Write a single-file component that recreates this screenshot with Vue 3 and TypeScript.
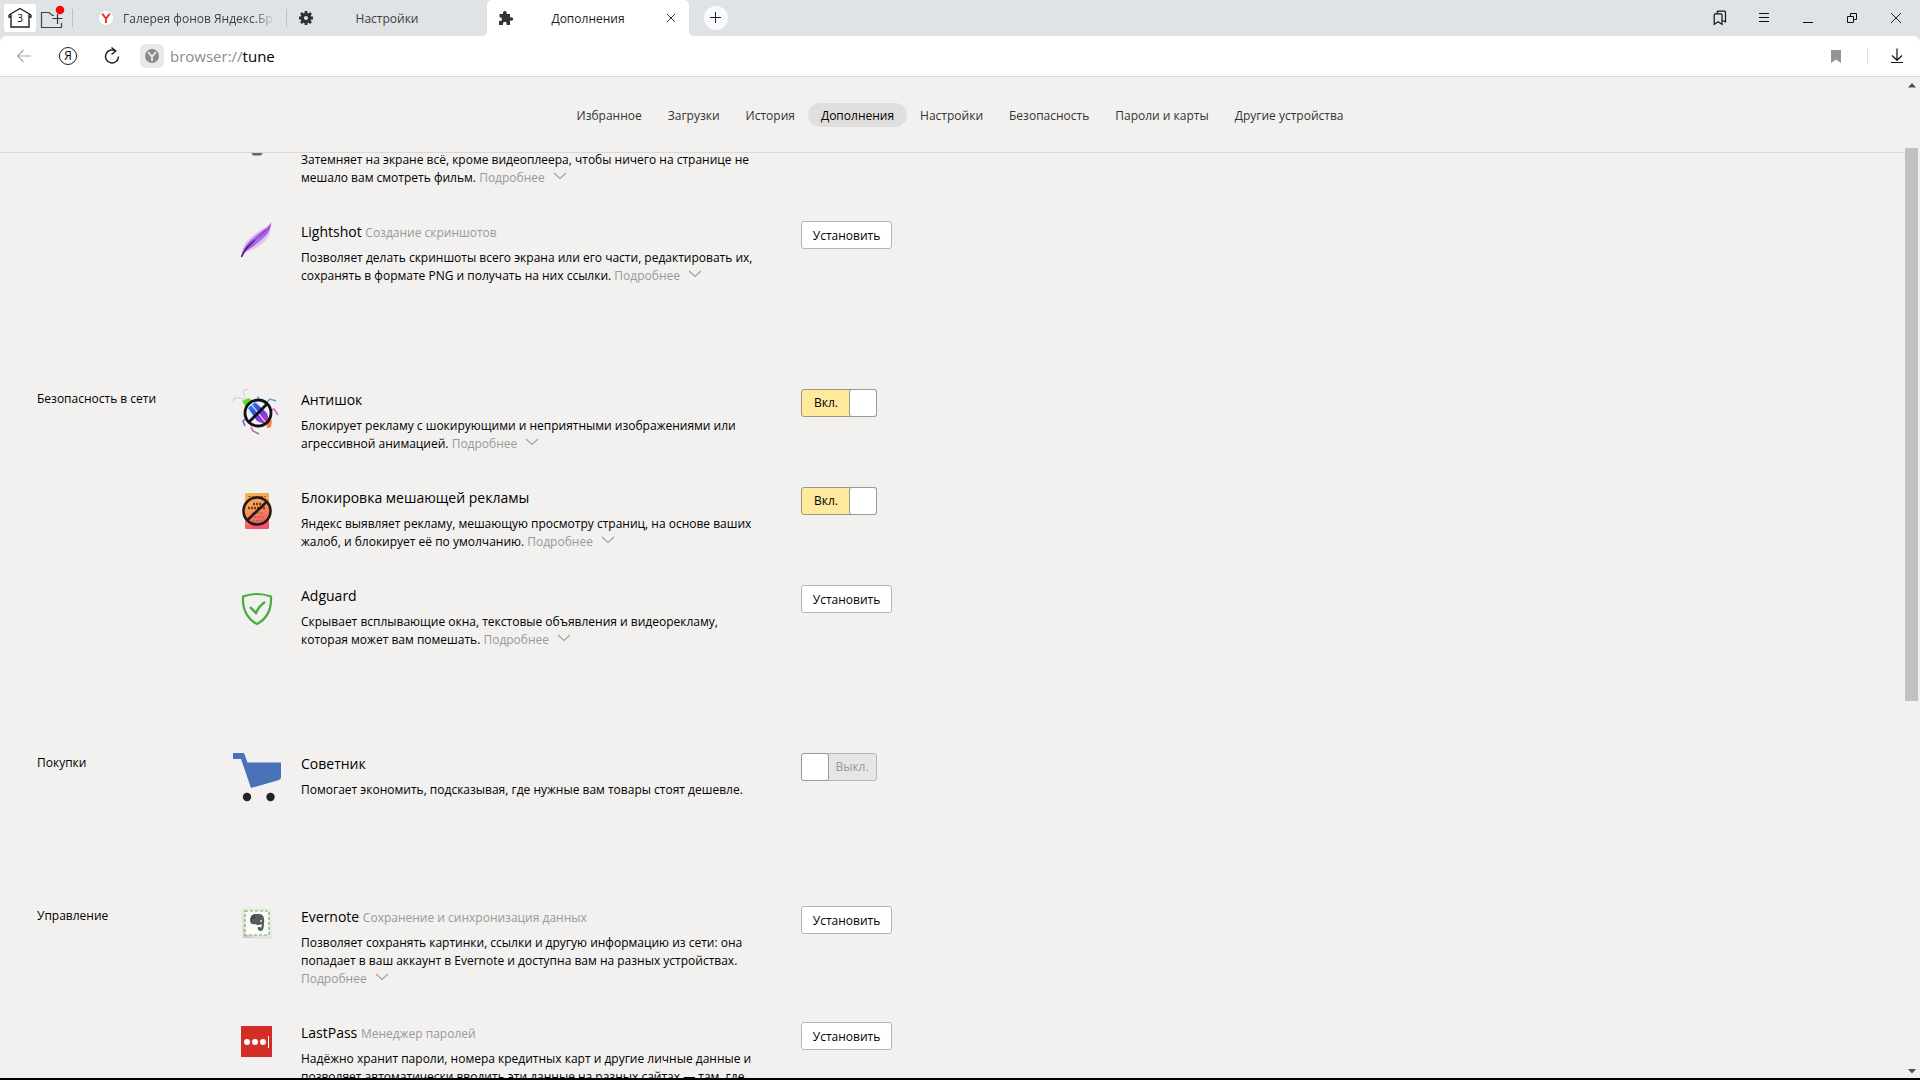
<script setup lang="ts">
import { reactive, ref } from 'vue'

type Icon = 'lamp' | 'feather' | 'bug' | 'adblock' | 'shield' | 'cart' | 'evernote' | 'lastpass'

interface Addon {
  id: string
  icon: Icon
  title?: string
  subtitle?: string
  lines: string[]
  more: boolean
  control?: 'install' | 'toggle'
  enabled?: boolean
}

interface Section {
  label: string
  addons: Addon[]
}

const navItems = [
  'Избранное',
  'Загрузки',
  'История',
  'Дополнения',
  'Настройки',
  'Безопасность',
  'Пароли и карты',
  'Другие устройства',
]
const activeNav = ref('Дополнения')

const sections = reactive<Section[]>([
  {
    label: '',
    addons: [
      {
        id: 'cinema',
        icon: 'lamp',
        lines: [
          'Затемняет на экране всё, кроме видеоплеера, чтобы ничего на странице не',
          'мешало вам смотреть фильм.',
        ],
        more: true,
      },
      {
        id: 'lightshot',
        icon: 'feather',
        title: 'Lightshot',
        subtitle: 'Создание скриншотов',
        lines: [
          'Позволяет делать скриншоты всего экрана или его части, редактировать их,',
          'сохранять в формате PNG и получать на них ссылки.',
        ],
        more: true,
        control: 'install',
      },
    ],
  },
  {
    label: 'Безопасность в сети',
    addons: [
      {
        id: 'antishock',
        icon: 'bug',
        title: 'Антишок',
        lines: [
          'Блокирует рекламу с шокирующими и неприятными изображениями или',
          'агрессивной анимацией.',
        ],
        more: true,
        control: 'toggle',
        enabled: true,
      },
      {
        id: 'adblock',
        icon: 'adblock',
        title: 'Блокировка мешающей рекламы',
        lines: [
          'Яндекс выявляет рекламу, мешающую просмотру страниц, на основе ваших',
          'жалоб, и блокирует её по умолчанию.',
        ],
        more: true,
        control: 'toggle',
        enabled: true,
      },
      {
        id: 'adguard',
        icon: 'shield',
        title: 'Adguard',
        lines: [
          'Скрывает всплывающие окна, текстовые объявления и видеорекламу,',
          'которая может вам помешать.',
        ],
        more: true,
        control: 'install',
      },
    ],
  },
  {
    label: 'Покупки',
    addons: [
      {
        id: 'sovetnik',
        icon: 'cart',
        title: 'Советник',
        lines: ['Помогает экономить, подсказывая, где нужные вам товары стоят дешевле.'],
        more: false,
        control: 'toggle',
        enabled: false,
      },
    ],
  },
  {
    label: 'Управление',
    addons: [
      {
        id: 'evernote',
        icon: 'evernote',
        title: 'Evernote',
        subtitle: 'Сохранение и синхронизация данных',
        lines: [
          'Позволяет сохранять картинки, ссылки и другую информацию из сети: она',
          'попадает в ваш аккаунт в Evernote и доступна вам на разных устройствах.',
          '',
        ],
        more: true,
        control: 'install',
      },
      {
        id: 'lastpass',
        icon: 'lastpass',
        title: 'LastPass',
        subtitle: 'Менеджер паролей',
        lines: [
          'Надёжно хранит пароли, номера кредитных карт и другие личные данные и',
          'позволяет автоматически вводить эти данные на разных сайтах — там, где',
        ],
        more: false,
        control: 'install',
      },
    ],
  },
])
</script>

<template>
  <div class="window">
    <header class="tabstrip">
      <button class="home" type="button" aria-label="Группы вкладок">
        <svg width="24" height="22" viewBox="0 0 24 22" fill="none" stroke="#222" stroke-width="1.4">
          <path d="M1 8 L12 1.5 L23 8 M3 7.500 V20 H21 V7.500 M1 8 V10 H3 M23 8 V10 H21" />
        </svg>
        <span>3</span>
      </button>
      <button class="folder" type="button" aria-label="Новая группа">
        <svg width="26" height="26" viewBox="0 0 26 26" fill="none">
          <path d="M21.500 18 V22.500 H1.500 V7.500 H9 L12.500 10.500 H14" stroke="#444" stroke-width="1.200" />
          <path d="M17.500 9 V19 M12.500 13.500 H22.500" stroke="#333" stroke-width="1.200" />
          <circle cx="20" cy="5" r="4.300" fill="#f80808" />
        </svg>
      </button>
      <span class="divider first"></span>
      <div class="tabs">
        <div class="tab">
          <svg width="16" height="16" viewBox="0 0 16 16">
            <circle cx="8" cy="8" r="7" fill="#fff" />
            <path d="M4.200 3.600 L8 8.600 L11.800 3.600 M8 8.400 V13" fill="none" stroke="#e5352d" stroke-width="1.900" />
          </svg>
          <span class="tab-title faded">Галерея фонов Яндекс.Бр</span>
        </div>
        <span class="divider"></span>
        <div class="tab">
          <svg width="16" height="16" viewBox="0 0 16 16">
            <circle cx="8" cy="8" r="3.700" fill="none" stroke="#2e3235" stroke-width="3.200" />
            <g stroke="#2e3235" stroke-width="2.800">
              <path d="M8 1 V4 M8 12 V15 M1 8 H4 M12 8 H15 M3 3 L5.200 5.200 M10.800 10.800 L13 13 M13 3 L10.800 5.200 M5.200 10.800 L3 13" />
            </g>
          </svg>
          <span class="tab-title">Настройки</span>
        </div>
        <div class="tab active">
          <svg width="16" height="16" viewBox="0 0 16 16">
            <path
              d="M1.500 4 H5 Q4.400 1 6.800 1 Q9.200 1 8.600 4 H12 V7.400 Q15.200 6.700 15.200 9 Q15.200 11.300 12 10.600 V15 H8.600 Q9 11.800 6.800 11.800 Q4.600 11.800 5 15 H1 V11 Q4 11.400 4 9.200 Q4 7 1.500 7.300 Z"
              fill="#333"
            />
          </svg>
          <span class="tab-title">Дополнения</span>
          <button class="tab-close" type="button" aria-label="Закрыть вкладку">
            <svg width="10" height="10" viewBox="0 0 10 10" stroke="#333" stroke-width="1">
              <path d="M1 1 L9 9 M9 1 L1 9" />
            </svg>
          </button>
        </div>
      </div>
      <button class="new-tab" type="button" aria-label="Новая вкладка">
        <svg width="12" height="12" viewBox="0 0 12 12" stroke="#222" stroke-width="1">
          <path d="M5.500 0 V11 M0 5.500 H11" />
        </svg>
      </button>
      <div class="window-controls">
        <button type="button" aria-label="Закладки">
          <svg width="14" height="16" viewBox="0 0 14 16" fill="none" stroke="#111" stroke-width="1.200">
            <path d="M1.200 4.800 Q1.200 3.800 2.200 3.800 H8 Q9 3.800 9 4.800 V14.400 L5.100 11.800 L1.200 14.400 Z" />
            <path d="M4.200 3.600 V2.200 Q4.200 1.200 5.200 1.200 H11.500 Q12.500 1.200 12.500 2.200 V11.800 L9.200 10.500" />
          </svg>
        </button>
        <button type="button" aria-label="Меню">
          <svg width="12" height="12" viewBox="0 0 12 12" stroke="#111"><path d="M1 1.500 H11 M1 5.500 H11 M1 9.500 H11" /></svg>
        </button>
        <button type="button" aria-label="Свернуть">
          <svg width="10" height="12" viewBox="0 0 10 12" stroke="#111"><path d="M0 10.500 H10" /></svg>
        </button>
        <button type="button" aria-label="Восстановить">
          <svg width="12" height="12" viewBox="0 0 12 12" fill="none" stroke="#111">
            <path d="M1.500 4.500 H7.500 V10.500 H1.500 Z M4.500 4.500 V1.500 H10.500 V7.500 H7.500" />
          </svg>
        </button>
        <button type="button" aria-label="Закрыть">
          <svg width="12" height="12" viewBox="0 0 12 12" stroke="#222" stroke-width="1"><path d="M1 1 L11 11 M11 1 L1 11" /></svg>
        </button>
      </div>
    </header>

    <div class="toolbar-back">
      <div class="toolbar">
        <button type="button" aria-label="Назад">
          <svg width="16" height="14" viewBox="0 0 16 14" fill="none" stroke="#aaa" stroke-width="1.200">
            <path d="M15 7 H1.500 M7.500 1 L1.500 7 L7.500 13" />
          </svg>
        </button>
        <button class="yandex" type="button" aria-label="Главная Яндекса">Я</button>
        <button type="button" aria-label="Обновить">
          <svg width="18" height="20" viewBox="0 0 18 20" fill="none" stroke="#222" stroke-width="1.500">
            <path d="M11.500 5 A6.500 6.500 0 1 0 14.500 10.500" />
            <path d="M7.500 1.500 L11.700 5 L7.500 8.500" />
          </svg>
        </button>
        <span class="site-badge">
          <svg width="16" height="16" viewBox="0 0 16 16">
            <circle cx="8" cy="8" r="7" fill="#8b8b8b" />
            <path d="M4 4 L8 8.600 L12 4 M8 8.400 V13" fill="none" stroke="#e9e9e9" stroke-width="1.800" />
          </svg>
        </span>
        <p class="url">browser://<b>tune</b></p>
        <div class="toolbar-right">
          <svg width="10" height="13" viewBox="0 0 10 13"><path d="M0 0 H10 V13 L5 9.500 L0 13 Z" fill="#949494" /></svg>
          <span class="toolbar-divider"></span>
          <svg width="12" height="16" viewBox="0 0 12 16" fill="none" stroke="#111" stroke-width="1.200">
            <path d="M6 0.500 V12 M1 7.500 L6 12.300 L11 7.500 M0 14.500 H12" />
          </svg>
        </div>
      </div>
    </div>

    <main class="page">
      <div class="page-body">
        <nav class="sections-nav">
          <a
            v-for="item in navItems"
            :key="item"
            href="#"
            :class="{ current: item === activeNav }"
            @click.prevent="activeNav = item"
            >{{ item }}</a
          >
        </nav>

        <div class="viewport">
          <section v-for="(section, index) in sections" :key="index" class="section">
            <h2 class="section-label">{{ section.label }}</h2>
            <div class="addons">
              <article v-for="addon in section.addons" :key="addon.id" class="addon">
                <div class="addon-icon">
                  <svg v-if="addon.icon === 'lamp'" width="48" height="8" viewBox="0 0 48 8">
                    <path d="M17 0 H31 L28 4.500 H20 Z" fill="#666" />
                  </svg>
                  <svg v-else-if="addon.icon === 'feather'" width="48" height="48" viewBox="0 0 48 48">
                    <defs>
                      <linearGradient id="feather" x1="0" y1="1" x2="1" y2="0">
                        <stop offset="0" stop-color="#7a35ba" />
                        <stop offset="0.500" stop-color="#b573e6" />
                        <stop offset="1" stop-color="#9a4ad4" />
                      </linearGradient>
                    </defs>
                    <path d="M8.500 36 C8 24 14 19 22 13 C30 6 36 6 38 1 C39 10 36 17 29 23 C21 30 12 29 8.500 36 Z" fill="#d2abf0" opacity="0.600" />
                    <path d="M8.500 36 C10 26 17 19 25 13 C31 8 36 7 38 1 C38 10 33 15 26 21 C18 28 11 29 8.500 36 Z" fill="url(#feather)" />
                    <path d="M8.500 36 Q12 27 22 19" fill="none" stroke="#521093" stroke-width="1.500" />
                    <path d="M22 19 L33 9" fill="none" stroke="#7c30c0" stroke-width="1" />
                  </svg>
                  <svg v-else-if="addon.icon === 'bug'" width="48" height="48" viewBox="0 0 48 48">
                    <defs>
                      <linearGradient id="bug" x1="0" y1="0" x2="1" y2="1">
                        <stop offset="0" stop-color="#23b6e8" />
                        <stop offset="0.300" stop-color="#2f5ae8" />
                        <stop offset="0.600" stop-color="#7b3fd8" />
                        <stop offset="1" stop-color="#d136b9" />
                      </linearGradient>
                    </defs>
                    <g fill="none" stroke-width="1.500">
                      <path d="M14 13 Q11 8 1 9 L0 14 M15 11 Q9 6 11 1 L15 0" stroke="#c6cfc3" stroke-width="1" />
                      <path d="M25 7 L26 12" stroke="#8ca0d5" />
                      <path d="M32 15 L37 10 L43 12" stroke="#55a0ee" />
                      <path d="M36 22 L41 20 L45 26" stroke="#da60bb" />
                      <path d="M18 38 L20 42 L26 45" stroke="#c060a8" />
                      <path d="M13 30 L10 32 L12 37" stroke="#6c60da" />
                    </g>
                    <path d="M9 12 L16 9 L21 14 L14 20 Z" fill="#63d933" />
                    <path d="M33 33 L39 31 L38 38 L34 39 Z" fill="#ff793b" />
                    <circle cx="25" cy="24" r="12.500" fill="#eef2ff" />
                    <path d="M15 19 L22 13 L34 24 L36 31 L31 35 L24 32 Z" fill="url(#bug)" />
                    <path d="M18 15 L33 34" stroke="#dae5ff" stroke-width="1.200" />
                    <circle cx="25" cy="24" r="13" fill="none" stroke="#111" stroke-width="2.800" />
                    <path d="M15.500 33.500 L34.500 14.500" stroke="#111" stroke-width="2.800" />
                  </svg>
                  <svg v-else-if="addon.icon === 'adblock'" width="48" height="48" viewBox="0 0 48 48">
                    <defs>
                      <linearGradient id="poster" x1="0" y1="0" x2="0.300" y2="1">
                        <stop offset="0" stop-color="#f3bb55" />
                        <stop offset="0.500" stop-color="#f79b55" />
                        <stop offset="1" stop-color="#f45271" />
                      </linearGradient>
                    </defs>
                    <rect x="12" y="6" width="24" height="36" rx="1" fill="url(#poster)" />
                    <path d="M20 17 H28 M15 21 H33" stroke="#6f3a20" stroke-width="2.600" stroke-dasharray="2 1" />
                    <path d="M15 9.500 H33 M19 26 H31 M17 30 H31 M19 34 H29" stroke="#a65a38" stroke-width="1" stroke-dasharray="3 1" />
                    <circle cx="24" cy="24" r="13.500" fill="none" stroke="#241a14" stroke-width="2.600" />
                    <path d="M14 33.500 L34 14.500" stroke="#241a14" stroke-width="2.600" />
                  </svg>
                  <svg v-else-if="addon.icon === 'shield'" width="48" height="48" viewBox="0 0 48 48" fill="none" stroke="#45ad43">
                    <path d="M10 11.500 Q17 9 24 9 Q31 9 38 11.500 Q39 31 24 39 Q9 31 10 11.500 Z" stroke-width="2.200" />
                    <path d="M17 22 L23 28 Q26 21 32 17" stroke-width="2.400" />
                  </svg>
                  <svg v-else-if="addon.icon === 'cart'" width="48" height="49" viewBox="0 0 48 49">
                    <path d="M0 0 H11 L14.500 9.500 H48 V24 Q48 26 46 27 L18 35 L8 6 H0 Z" fill="#4a72b8" />
                    <circle cx="14" cy="44" r="4.200" fill="#222" />
                    <circle cx="37.500" cy="44" r="4.200" fill="#222" />
                  </svg>
                  <svg v-else-if="addon.icon === 'evernote'" width="48" height="48" viewBox="0 0 48 48">
                    <defs>
                      <linearGradient id="sheet" x1="1" y1="0" x2="0" y2="1">
                        <stop offset="0" stop-color="#eeeeeb" />
                        <stop offset="0.700" stop-color="#e3e4df" />
                        <stop offset="1" stop-color="#bdbfba" />
                      </linearGradient>
                    </defs>
                    <path d="M8 2 H38 L39 33 L10 32 Z" fill="url(#sheet)" />
                    <rect x="12" y="5" width="24" height="24" fill="#fafbf7" stroke="#6cb44f" stroke-width="1.200" stroke-dasharray="3 2" />
                    <path d="M18 10 L21 8 H27 Q32 9 31 17 Q31 26 27 25 Q24 24 25 21 H27 L28 22 L29 18 Q25 20 22 18 Q17 19 17 14 Z" fill="#565b5b" />
                    <path d="M17 13 L22 8 V13 Z" fill="#41494b" />
                    <circle cx="28" cy="15" r="1" fill="#e2e5e2" />
                  </svg>
                  <svg v-else width="48" height="48" viewBox="0 0 48 48">
                    <rect x="8" y="4" width="31" height="31" fill="#d32d27" />
                    <g fill="#fff">
                      <circle cx="14" cy="20" r="3" />
                      <circle cx="22" cy="20" r="3" />
                      <circle cx="30" cy="20" r="3" />
                      <rect x="35" y="14" width="1" height="12" />
                    </g>
                  </svg>
                </div>
                <div class="addon-text">
                  <h3 v-if="addon.title">
                    {{ addon.title }} <small v-if="addon.subtitle">{{ addon.subtitle }}</small>
                  </h3>
                  <p>
                    <template v-for="(line, i) in addon.lines" :key="i"><br v-if="i > 0" />{{ line }}</template>
                    {{ ' ' }}<a v-if="addon.more" class="more" href="#" @click.prevent
                      >Подробнее<svg width="14" height="8" viewBox="0 0 14 8" fill="none" stroke="#a3a3a3" stroke-width="1.200"><path d="M1 1 L7 6.500 L13 1" /></svg></a>
                  </p>
                </div>
                <button v-if="addon.control === 'install'" class="install" type="button">Установить</button>
                <label v-else-if="addon.control === 'toggle'" class="toggle" :class="{ on: addon.enabled }">
                  <input v-model="addon.enabled" type="checkbox" role="switch" :aria-label="addon.title" />
                  <span>{{ addon.enabled ? 'Вкл.' : 'Выкл.' }}</span>
                </label>
              </article>
            </div>
          </section>
        </div>
      </div>

      <div class="scrollbar">
        <svg width="8" height="5" viewBox="0 0 8 5"><path d="M0 4.500 L4 0 L8 4.500 Z" fill="#505050" /></svg>
        <div class="track"><div class="thumb"></div></div>
        <svg width="8" height="5" viewBox="0 0 8 5"><path d="M0 0 L4 4.500 L8 0 Z" fill="#505050" /></svg>
      </div>
    </main>
  </div>
</template>

<style>
body {
  margin: 0;
  background: #000;
}
</style>

<style scoped>
.window {
  box-sizing: border-box;
  display: flex;
  flex-direction: column;
  height: 100vh;
  border-bottom: 2px solid #000;
  background: #f2f1ef;
  color: #000;
  font: 12px/18px 'Open Sans', 'Noto Sans', sans-serif;
}

button {
  display: flex;
  align-items: center;
  justify-content: center;
  margin: 0;
  padding: 0;
  border: 0;
  background: none;
  color: inherit;
  font: inherit;
}

svg {
  flex: none;
}

.tabstrip {
  display: flex;
  flex: none;
  align-items: center;
  height: 36px;
  padding-left: 4px;
  background: #dfe3e6;
}

.home {
  position: relative;
  width: 32px;
  height: 28px;
  border-radius: 3px;
  background: #fff;
}

.home span {
  position: absolute;
  inset: 0;
  font-size: 10px;
  line-height: 29px;
}

.folder {
  width: 34px;
  height: 30px;
}

.divider {
  width: 1px;
  height: 18px;
  background: #bcc0c3;
}

.divider.first {
  margin: 0 10px 0 2px;
}

.tabs {
  display: flex;
  align-items: center;
  align-self: stretch;
}

.tab {
  position: relative;
  box-sizing: border-box;
  display: flex;
  align-items: center;
  align-self: stretch;
  width: 200px;
  padding: 0 11px;
  color: #3c3f42;
}

.tab:first-child {
  width: 203px;
  padding-left: 15px;
}

.tab-title {
  flex: 1;
  overflow: hidden;
  padding-top: 2px;
  line-height: 20px;
  text-align: center;
  white-space: nowrap;
}

.tab:nth-child(3) .tab-title {
  padding-right: 16px;
}

.tab-title.faded {
  margin-left: 9px;
  text-align: left;
  mask-image: linear-gradient(to right, #000 85%, transparent);
}

.tab.active {
  width: 202px;
  border-radius: 5px 5px 0 0;
  background: #fff;
  color: #222;
}

.tab.active .tab-title {
  padding-right: 2px;
}

.tab.active::before,
.tab.active::after {
  content: '';
  position: absolute;
  bottom: 0;
  width: 5px;
  height: 5px;
}

.tab.active::before {
  right: 100%;
  background: radial-gradient(circle at 0 0, transparent 5px, #fff 5px);
}

.tab.active::after {
  left: 100%;
  background: radial-gradient(circle at 100% 0, transparent 5px, #fff 5px);
}

.tab-close {
  width: 14px;
  height: 14px;
}

.new-tab {
  width: 24px;
  height: 24px;
  margin-left: 15px;
  border-radius: 50%;
  background: #f9fafb;
}

.window-controls {
  display: flex;
  margin-left: auto;
  padding-right: 2px;
}

.window-controls button {
  width: 44px;
  height: 36px;
}

.toolbar-back {
  flex: none;
  background: #dfe3e6;
}

.toolbar {
  display: flex;
  align-items: center;
  height: 40px;
  padding: 0 17px 0 16px;
  border-bottom: 1px solid #dadada;
  border-radius: 6px 6px 0 0;
  background: #fff;
}

.yandex {
  box-sizing: border-box;
  width: 18px;
  height: 18px;
  margin: 0 27px;
  border: 1px solid #222;
  border-radius: 50%;
}

.site-badge {
  display: flex;
  align-items: center;
  justify-content: center;
  width: 24px;
  height: 24px;
  margin-left: 18px;
  border-radius: 5px;
  background: #e9e9e9;
}

.url {
  margin: 0 0 0 6px;
  color: #8d8d8d;
  font-size: 15px;
  line-height: 24px;
}

.url b {
  color: #000;
  font-weight: 400;
}

.toolbar-right {
  display: flex;
  align-items: center;
  margin-left: auto;
}

.toolbar-divider {
  width: 1px;
  height: 16px;
  margin: 0 23px 0 26px;
  background: #ddd;
}

.page {
  display: flex;
  flex: 1;
  min-height: 0;
}

.page-body {
  display: flex;
  flex: 1;
  flex-direction: column;
  min-width: 0;
}

.sections-nav {
  display: flex;
  flex: none;
  justify-content: center;
  height: 49px;
  padding: 26px 0 0 15px;
  border-bottom: 1px solid #d9d8d6;
}

.sections-nav a {
  height: 24px;
  padding: 0 13px;
  border-radius: 12px;
  color: #333;
  line-height: 26px;
  text-decoration: none;
}

.sections-nav a.current {
  background: #e0dfdd;
  color: #000;
}

.viewport {
  flex: 1;
  min-height: 0;
  overflow: hidden;
  padding-left: 37px;
}

.section {
  display: flex;
  margin-bottom: 104px;
}

.section:first-child {
  margin-top: -2px;
}

.section-label {
  width: 196px;
  margin: 0;
  font-size: 12px;
  font-weight: 400;
  line-height: 20px;
}

.addons {
  display: flex;
  flex: 1;
  flex-direction: column;
  gap: 34px;
}

.addon {
  display: flex;
  align-items: flex-start;
}

.addon-icon {
  width: 48px;
  margin-right: 20px;
}

.addon-icon svg {
  display: block;
}

.addon-text {
  width: 500px;
}

.addon-text h3 {
  margin: 0 0 6px;
  font-size: 14px;
  font-weight: 400;
  line-height: 22px;
}

.addon-text small {
  color: #999;
  font-size: 12px;
  line-height: 12px;
}

.addon-text p {
  margin: 0;
  white-space: nowrap;
}

.more {
  color: #999;
  text-decoration: none;
}

.more svg {
  margin: 0 0 2px 8px;
}

.install {
  box-sizing: border-box;
  width: 91px;
  height: 28px;
  padding-top: 1px;
  border: 1px solid #b5b5b3;
  border-radius: 3px;
  background: #fff;
}

.toggle {
  box-sizing: border-box;
  display: flex;
  width: 76px;
  height: 28px;
  border: 1px solid #b5b5b3;
  border-radius: 3px;
  background: #e7e6e4;
  color: #999;
}

.toggle.on {
  flex-direction: row-reverse;
  border-color: #9b987f;
  background: #ffe99c;
  color: #000;
}

.toggle input {
  appearance: none;
  box-sizing: border-box;
  width: 28px;
  height: 28px;
  margin: -1px;
  border: 1px solid #9a9a94;
  border-radius: 3px;
  background: #fff;
}

.toggle span {
  flex: 1;
  line-height: 26px;
  text-align: center;
}

.scrollbar {
  box-sizing: border-box;
  display: flex;
  flex-direction: column;
  align-items: center;
  width: 15px;
  padding: 6px 2px 4px 0;
}

.track {
  flex: 1;
  align-self: stretch;
  padding-top: 60px;
}

.thumb {
  height: 60%;
  background: #c1c1c1;
}
</style>
